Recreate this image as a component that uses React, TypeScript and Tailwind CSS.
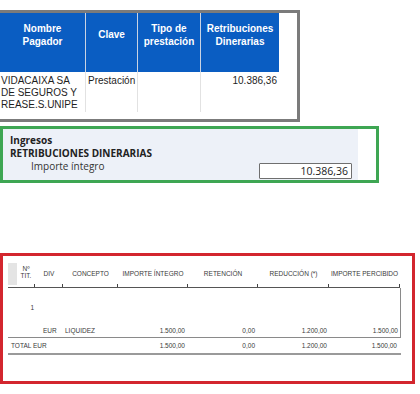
import React from "react";

const arial = { fontFamily: '"Liberation Sans", Arial, sans-serif' };
const open = { fontFamily: '"Open Sans", "Noto Sans", sans-serif' };

function Tick() {
  return <div className="mt-auto self-end w-px h-[3px] bg-[#444]" />;
}

export default function App() {
  return (
    <div className="w-[420px] h-[394px] bg-white overflow-hidden flex flex-col">
      {/* Gray box with blue table */}
      <div className="mt-[10px] w-[300px] h-[112px] border-t-[3px] border-r-[3px] border-b-[3px] border-[#7b7b7b] flex flex-col" style={arial}>
        <div className="w-[279px] grid grid-cols-[85px_52px_63px_79px] h-[59px] bg-[#0a5dc2] text-white font-bold text-[10px] leading-[13px]">
          <div className="flex items-center justify-center text-center pb-[16px]">Nombre<br />Pagador</div>
          <div className="flex items-center justify-center text-center pb-[16px] border-l border-[#c9d3e3]">Clave</div>
          <div className="flex items-center justify-center text-center pb-[16px] border-l border-[#c9d3e3]">Tipo de<br />prestación</div>
          <div className="flex items-center justify-center text-center pb-[16px] border-l border-[#c9d3e3]">Retribuciones<br />Dinerarias</div>
        </div>
        <div className="w-[279px] grid grid-cols-[85px_52px_63px_79px] h-[40px] text-[10px] leading-[12px] text-[#1e1e1e]">
          <div className="pt-[3px] pl-[1px]">VIDACAIXA SA<br />DE SEGUROS Y<br />REASE.S.UNIPE</div>
          <div className="pt-[3px] pl-[2px] border-l border-[#e2e2e2]">Prestación</div>
          <div className="border-l border-[#e2e2e2]" />
          <div className="pt-[3px] pr-[2px] text-right border-l border-[#e2e2e2]">10.386,36</div>
        </div>
      </div>

      {/* Green box */}
      <div className="mt-[4px] w-[379px] h-[57px] border-[3px] border-[#3ea653] flex" style={open}>
        <div className="w-[355px] h-full bg-[#edf1f8] flex flex-col pl-[7px] pt-[5px] text-[10px] leading-[13px] text-[#222]">
          <div className="font-bold">Ingresos</div>
          <div className="font-bold">RETRIBUCIONES DINERARIAS</div>
          <div className="flex items-start">
            <div className="pl-[21px] text-[#333]">Importe íntegro</div>
            <div className="ml-auto mr-[6px] mt-[3px] w-[93px] h-[16px] bg-white border border-[#6f6f6f] rounded-[1px] text-right pr-[3px] text-[10.5px] leading-[14px] text-[#222]">10.386,36</div>
          </div>
        </div>
        <div className="flex-1 bg-white" />
      </div>

      {/* Red box */}
      <div className="mt-[70px] w-[415px] h-[131px] border-[3px] border-[#d3262e] bg-white pl-[5px] pt-[7px] text-[6.5px] text-[#3a3a3a]" style={arial}>
        <div className="w-[393px]">
          {/* header */}
          <div className="grid grid-cols-[9px_18px_28px_55px_70px_70px_71px_71px] h-[25px] border-b border-[#555] w-[392px]">
            <div className="bg-[#e4e4e4] h-[22px]" />
            <div className="flex flex-col">
              <div className="text-center leading-[6.5px] pt-[3px]">Nº<br />TIT.</div>
              <Tick />
            </div>
            <div className="flex flex-col">
              <div className="text-center leading-[8px] pt-[7px]">DIV</div>
              <Tick />
            </div>
            <div className="flex flex-col">
              <div className="text-center leading-[8px] pt-[7px]">CONCEPTO</div>
              <Tick />
            </div>
            <div className="flex flex-col">
              <div className="text-center leading-[8px] pt-[7px]">IMPORTE ÍNTEGRO</div>
              <Tick />
            </div>
            <div className="flex flex-col">
              <div className="text-center leading-[8px] pt-[7px]">RETENCIÓN</div>
              <Tick />
            </div>
            <div className="flex flex-col">
              <div className="text-center leading-[8px] pt-[7px]">REDUCCIÓN (*)</div>
              <Tick />
            </div>
            <div className="flex flex-col">
              <div className="text-center leading-[8px] pt-[7px]">IMPORTE PERCIBIDO</div>
              <Tick />
            </div>
          </div>
          {/* body */}
          <div className="w-[393px] h-[50px] border-r border-b border-[#8a8a8a] flex flex-col leading-[8px]">
            <div className="grid grid-cols-[9px_18px_28px_55px_70px_70px_71px_71px] pt-[16px]">
              <div />
              <div className="text-right pr-[1px]">1</div>
            </div>
            <div className="grid grid-cols-[9px_18px_28px_55px_70px_70px_71px_71px] pt-[15px]">
              <div />
              <div />
              <div className="pl-[8px]">EUR</div>
              <div className="pl-[2px]">LIQUIDEZ</div>
              <div className="text-right pr-[3px]">1.500,00</div>
              <div className="text-right pr-[3px]">0,00</div>
              <div className="text-right pr-[2px]">1.200,00</div>
              <div className="text-right pr-[2px]">1.500,00</div>
            </div>
          </div>
          <div className="w-[393px] grid grid-cols-[9px_18px_28px_55px_70px_70px_71px_71px] pt-[4px] pb-[3px] border-b-2 border-[#9a9a9a] leading-[8px]">
            <div className="col-span-4 pl-[3px]">TOTAL EUR</div>
            <div className="text-right pr-[3px]">1.500,00</div>
            <div className="text-right pr-[3px]">0,00</div>
            <div className="text-right pr-[2px]">1.200,00</div>
            <div className="text-right pr-[3px]">1.500,00</div>
          </div>
        </div>
      </div>
    </div>
  );
}
